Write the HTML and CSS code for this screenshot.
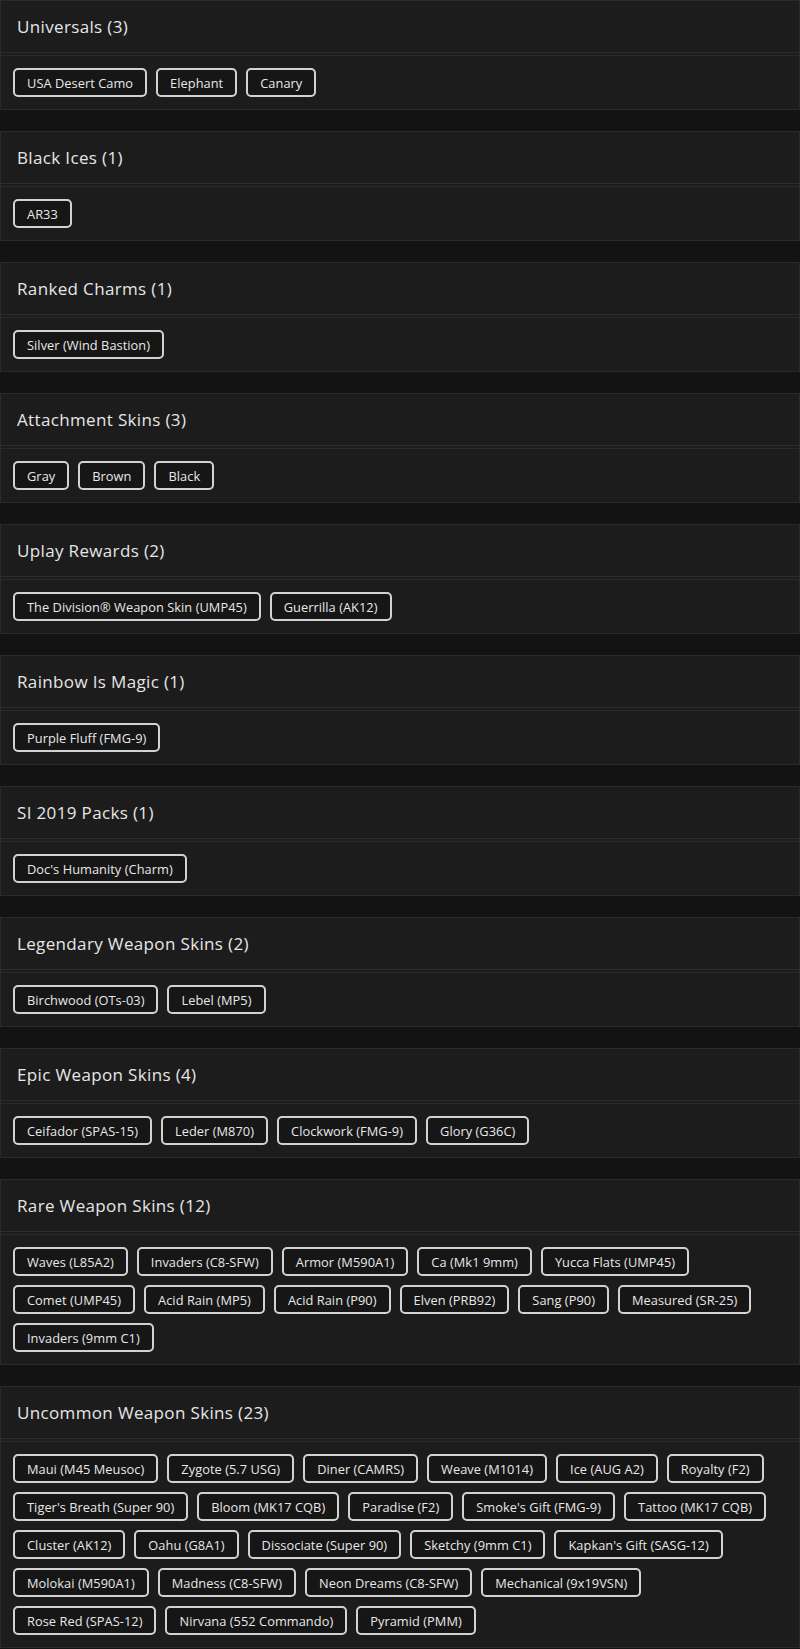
FILE: index.html
```html
<!DOCTYPE html>
<html>
<head>
<meta charset="utf-8">
<link rel="stylesheet" href="styles.css">
</head>
<body>
<div class="list">
  <section class="card">
    <h2 class="card-title">Universals (3)</h2>
    <div class="card-body">
      <span class="chip">USA Desert Camo</span><span class="chip">Elephant</span><span class="chip">Canary</span>
    </div>
  </section>
  <section class="card">
    <h2 class="card-title">Black Ices (1)</h2>
    <div class="card-body">
      <span class="chip">AR33</span>
    </div>
  </section>
  <section class="card">
    <h2 class="card-title">Ranked Charms (1)</h2>
    <div class="card-body">
      <span class="chip">Silver (Wind Bastion)</span>
    </div>
  </section>
  <section class="card">
    <h2 class="card-title">Attachment Skins (3)</h2>
    <div class="card-body">
      <span class="chip">Gray</span><span class="chip">Brown</span><span class="chip">Black</span>
    </div>
  </section>
  <section class="card">
    <h2 class="card-title">Uplay Rewards (2)</h2>
    <div class="card-body">
      <span class="chip">The Division® Weapon Skin (UMP45)</span><span class="chip">Guerrilla (AK12)</span>
    </div>
  </section>
  <section class="card">
    <h2 class="card-title">Rainbow Is Magic (1)</h2>
    <div class="card-body">
      <span class="chip">Purple Fluff (FMG-9)</span>
    </div>
  </section>
  <section class="card">
    <h2 class="card-title">SI 2019 Packs (1)</h2>
    <div class="card-body">
      <span class="chip">Doc's Humanity (Charm)</span>
    </div>
  </section>
  <section class="card">
    <h2 class="card-title">Legendary Weapon Skins (2)</h2>
    <div class="card-body">
      <span class="chip">Birchwood (OTs-03)</span><span class="chip">Lebel (MP5)</span>
    </div>
  </section>
  <section class="card">
    <h2 class="card-title">Epic Weapon Skins (4)</h2>
    <div class="card-body">
      <span class="chip">Ceifador (SPAS-15)</span><span class="chip">Leder (M870)</span><span class="chip">Clockwork (FMG-9)</span><span class="chip">Glory (G36C)</span>
    </div>
  </section>
  <section class="card">
    <h2 class="card-title">Rare Weapon Skins (12)</h2>
    <div class="card-body">
      <span class="chip">Waves (L85A2)</span><span class="chip">Invaders (C8-SFW)</span><span class="chip">Armor (M590A1)</span><span class="chip">Ca (Mk1 9mm)</span><span class="chip">Yucca Flats (UMP45)</span><span class="chip">Comet (UMP45)</span><span class="chip">Acid Rain (MP5)</span><span class="chip">Acid Rain (P90)</span><span class="chip">Elven (PRB92)</span><span class="chip">Sang (P90)</span><span class="chip">Measured (SR-25)</span><span class="chip">Invaders (9mm C1)</span>
    </div>
  </section>
  <section class="card">
    <h2 class="card-title">Uncommon Weapon Skins (23)</h2>
    <div class="card-body">
      <span class="chip">Maui (M45 Meusoc)</span><span class="chip">Zygote (5.7 USG)</span><span class="chip">Diner (CAMRS)</span><span class="chip">Weave (M1014)</span><span class="chip">Ice (AUG A2)</span><span class="chip">Royalty (F2)</span><span class="chip">Tiger's Breath (Super 90)</span><span class="chip">Bloom (MK17 CQB)</span><span class="chip">Paradise (F2)</span><span class="chip">Smoke's Gift (FMG-9)</span><span class="chip">Tattoo (MK17 CQB)</span><span class="chip">Cluster (AK12)</span><span class="chip">Oahu (G8A1)</span><span class="chip">Dissociate (Super 90)</span><span class="chip">Sketchy (9mm C1)</span><span class="chip">Kapkan's Gift (SASG-12)</span><span class="chip">Molokai (M590A1)</span><span class="chip">Madness (C8-SFW)</span><span class="chip">Neon Dreams (C8-SFW)</span><span class="chip">Mechanical (9x19VSN)</span><span class="chip">Rose Red (SPAS-12)</span><span class="chip">Nirvana (552 Commando)</span><span class="chip">Pyramid (PMM)</span>
    </div>
  </section>
</div>
</body>
</html>
```

FILE: styles.css
```css
html, body {
  margin: 0;
  padding: 0;
  background: #131313;
}
body {
  font-family: "Open Sans", "Noto Sans", sans-serif;
  color: #e4e4e4;
}
.list {
  display: flex;
  flex-direction: column;
  gap: 21px;
}
.card {
  background: #1c1c1c;
  border: 1px solid #2a2a2a;
}
.card-title {
  margin: 0;
  height: 51px;
  padding: 0 16px;
  display: flex;
  align-items: center;
  font-size: 17px;
  font-weight: 500;
  letter-spacing: 0.35px;
  color: #e6e6e6;
  border-bottom: 1px solid #2e2e2e;
}
.card-body {
  margin-top: 2px;
  border-top: 1px solid #2a2a2a;
  padding: 12px 12px 12px 12px;
  display: flex;
  flex-wrap: wrap;
  gap: 9px 9px;
}
.chip {
  box-sizing: border-box;
  height: 29px;
  padding: 0 12px;
  display: flex;
  align-items: center;
  border: 2px solid #d2d2d2;
  border-radius: 5px;
  background: #161616;
  font-size: 12.8px;
  letter-spacing: 0.05px;
  color: #e8e8e8;
  white-space: nowrap;
}
```
